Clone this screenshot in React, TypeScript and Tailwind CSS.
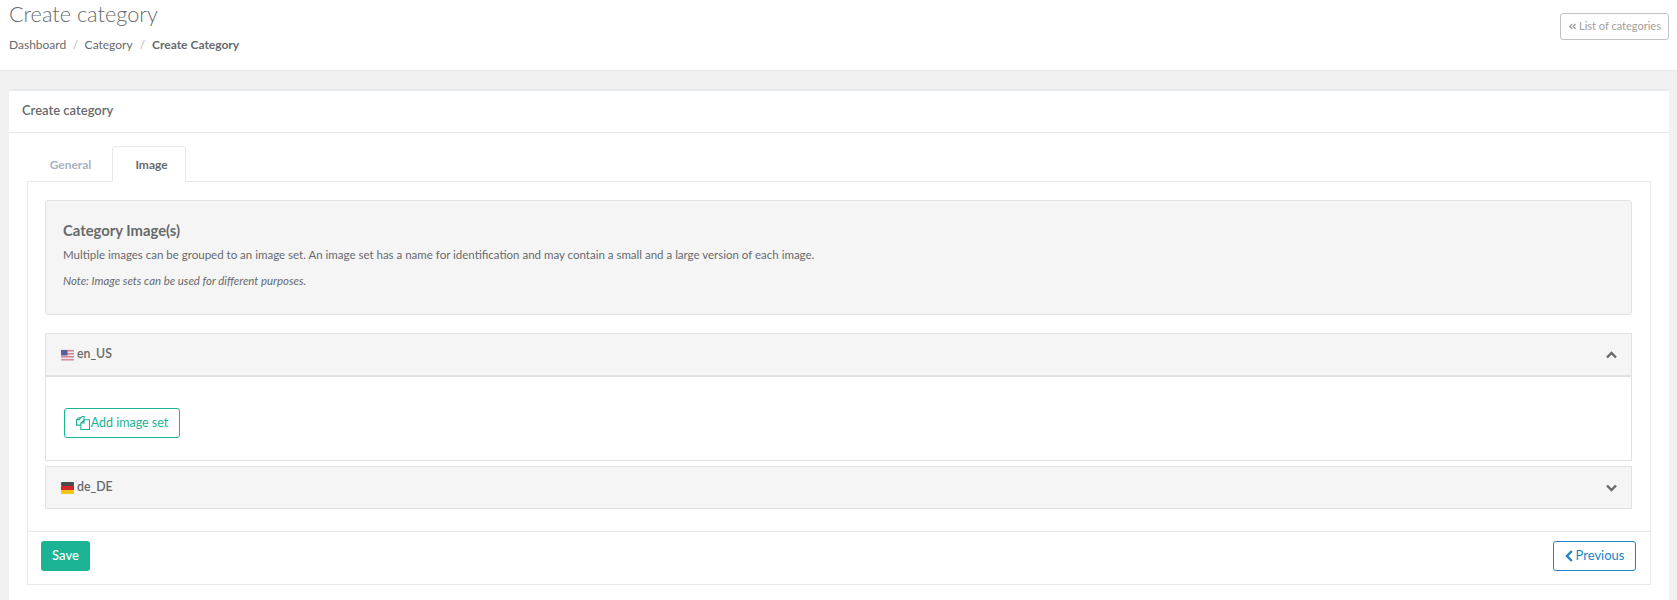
import { FaAngleDoubleLeft } from "react-icons/fa";

function FlagUS() {
  return (
    <svg width="13" height="12" viewBox="0 0 13 12" className="shrink-0" aria-hidden>
      <rect width="13" height="12" rx="1" fill="#e8e8ee" />
      <rect y="1" width="13" height="1.5" fill="#d9838f" />
      <rect y="4" width="13" height="1.5" fill="#d9838f" />
      <rect y="7" width="13" height="1.5" fill="#d9838f" />
      <rect y="10" width="13" height="1.5" fill="#d98f98" />
      <rect y="1" width="6.5" height="5.5" fill="#5a5f96" />
    </svg>
  );
}

function FlagDE() {
  return (
    <svg width="13" height="12" viewBox="0 0 13 12" className="shrink-0" aria-hidden>
      <rect width="13" height="4" rx="1" fill="#4a4a4a" />
      <rect y="4" width="13" height="4" fill="#d5272b" />
      <rect y="8" width="13" height="4" rx="1" fill="#f2c618" />
    </svg>
  );
}

function Chevron({ up }: { up: boolean }) {
  return (
    <svg width="11" height="8" viewBox="0 0 11 8" fill="none" stroke="#676a6c" strokeWidth="2.4" aria-hidden>
      <path d={up ? "M1 6.5 5.5 2l4.5 4.5" : "M1 1.5 5.5 6l4.5-4.5"} />
    </svg>
  );
}

function FilesIcon() {
  return (
    <svg width="14" height="14" viewBox="0 0 13 13" fill="none" stroke="#1ab394" strokeWidth="1" className="shrink-0" aria-hidden>
      <path d="M5.5.5h2v3M5.5.5 2.5 3.5M.5 3.5h3V.9M2.5 1.5.5 3.5v5h4" />
      <path d="M7.5 3.5h1l0 0 4 0v9h-8v-6l3-3zM7.5 3.5v3h-3" />
    </svg>
  );
}

function AccordionHead({
  flag,
  label,
  open,
}: {
  flag: React.ReactNode;
  label: string;
  open: boolean;
}) {
  return (
    <div
      className={
        "flex items-center justify-between bg-[#f5f5f5] pl-[15px] pr-[14px] " +
        (open ? "h-[43px] border-b-2 border-[#e2e2e2]" : "h-[41px]")
      }
    >
      <div className="flex items-center gap-[3px] text-[12.3px] font-semibold text-[#676a6c]">
        {flag}
        <span>{label}</span>
      </div>
      <Chevron up={open} />
    </div>
  );
}

export default function App() {
  return (
    <div className="h-[600px] overflow-hidden bg-[#f1f1f1] font-['Lato',sans-serif] text-[#676a6c]">
      <header className="flex h-[71px] items-start justify-between border-b border-[#e7eaec] bg-white pl-[9px] pr-[8px]">
        <div>
          <h1 className="mt-[1px] text-[21.7px] leading-[26px] font-light text-[#676a6c]">Create category</h1>
          <nav className="mt-[9px] flex items-center text-[12px] leading-[17px]">
            <span>Dashboard</span>
            <span className="px-[6.5px] text-[#b5b5b5]">/</span>
            <span>Category</span>
            <span className="px-[7px] text-[#b5b5b5]">/</span>
            <span className="font-bold">Create Category</span>
          </nav>
        </div>
        <button className="mt-[13px] flex h-[27px] w-[109px] items-center justify-center gap-[2px] rounded-[3px] border border-[#c2c2c2] bg-white text-[11px] text-[#a0a0a0]">
          <FaAngleDoubleLeft className="text-[9px]" />
          List of categories
        </button>
      </header>

      <main className="ml-[9px] mr-[8px] mt-[18px] h-[511px] border-t-2 border-[#e7eaec] bg-white">
        <div className="flex h-[42px] items-center border-b border-[#e7eaec] pb-[2px] pl-[13px] text-[13px] font-semibold text-[#676a6c]">
          Create category
        </div>

        <div className="ml-[18px] mr-[18px] mt-[13px]">
          <div className="flex h-[35px] text-[12px] font-bold">
            <div className="flex w-[85px] items-center justify-center pl-[2px] pt-[2px] text-[#a7b1c2]">General</div>
            <div className="relative z-10 flex h-[36px] w-[74px] items-center justify-center rounded-t-[4px] border border-b-0 border-[#e7eaec] bg-white pl-[5px] pt-[1px] text-[#676a6c]">
              Image
            </div>
          </div>

          <div className="h-[404px] border border-[#e7eaec]">
            <div className="pl-[17px] pr-[18px] pt-[18px]">
              <section className="h-[115px] rounded-[3px] border border-[#e3e3e3] bg-[#f5f5f5] px-[17px] pt-[21px]">
                <h3 className="text-[14.8px] leading-[17px] font-bold">Category Image(s)</h3>
                <p className="mt-[7px] text-[11.5px] leading-[17px]">
                  Multiple images can be grouped to an image set. An image set has a name for identification and may contain a small and a large version of each image.
                </p>
                <p className="mt-[9px] text-[11.4px] leading-[17px] italic">Note: Image sets can be used for different purposes.</p>
              </section>

              <div className="mt-[18px] border border-[#e2e2e2]">
                <AccordionHead flag={<FlagUS />} label="en_US" open />
                <div className="flex h-[83px] bg-white pl-[18px] pt-[31px]">
                  <button className="flex h-[30px] w-[116px] items-center justify-center gap-[1px] rounded-[3px] border border-[#1ab394] bg-white text-[12.5px] text-[#1ab394]">
                    <FilesIcon />
                    Add image set
                  </button>
                </div>
              </div>

              <div className="mt-[5px] border border-[#e2e2e2]">
                <AccordionHead flag={<FlagDE />} label="de_DE" open={false} />
              </div>
            </div>

            <div className="mt-[22px] flex items-center justify-between border-t border-[#e7eaec] pl-[13px] pr-[14px] pt-[9px]">
              <button className="h-[30px] w-[49px] rounded-[3px] bg-[#1ab394] text-[13px] font-medium text-white">Save</button>
              <button className="flex h-[30px] w-[83px] items-center justify-center gap-[3px] rounded-[3px] border border-[#1c84c6] bg-white text-[13px] text-[#1c84c6]">
                <svg width="8" height="12" viewBox="0 0 8 12" fill="none" stroke="#1c84c6" strokeWidth="2.4" aria-hidden>
                  <path d="M6.8 1 2 6l4.8 5" />
                </svg>
                Previous
              </button>
            </div>
          </div>
        </div>
      </main>
    </div>
  );
}
